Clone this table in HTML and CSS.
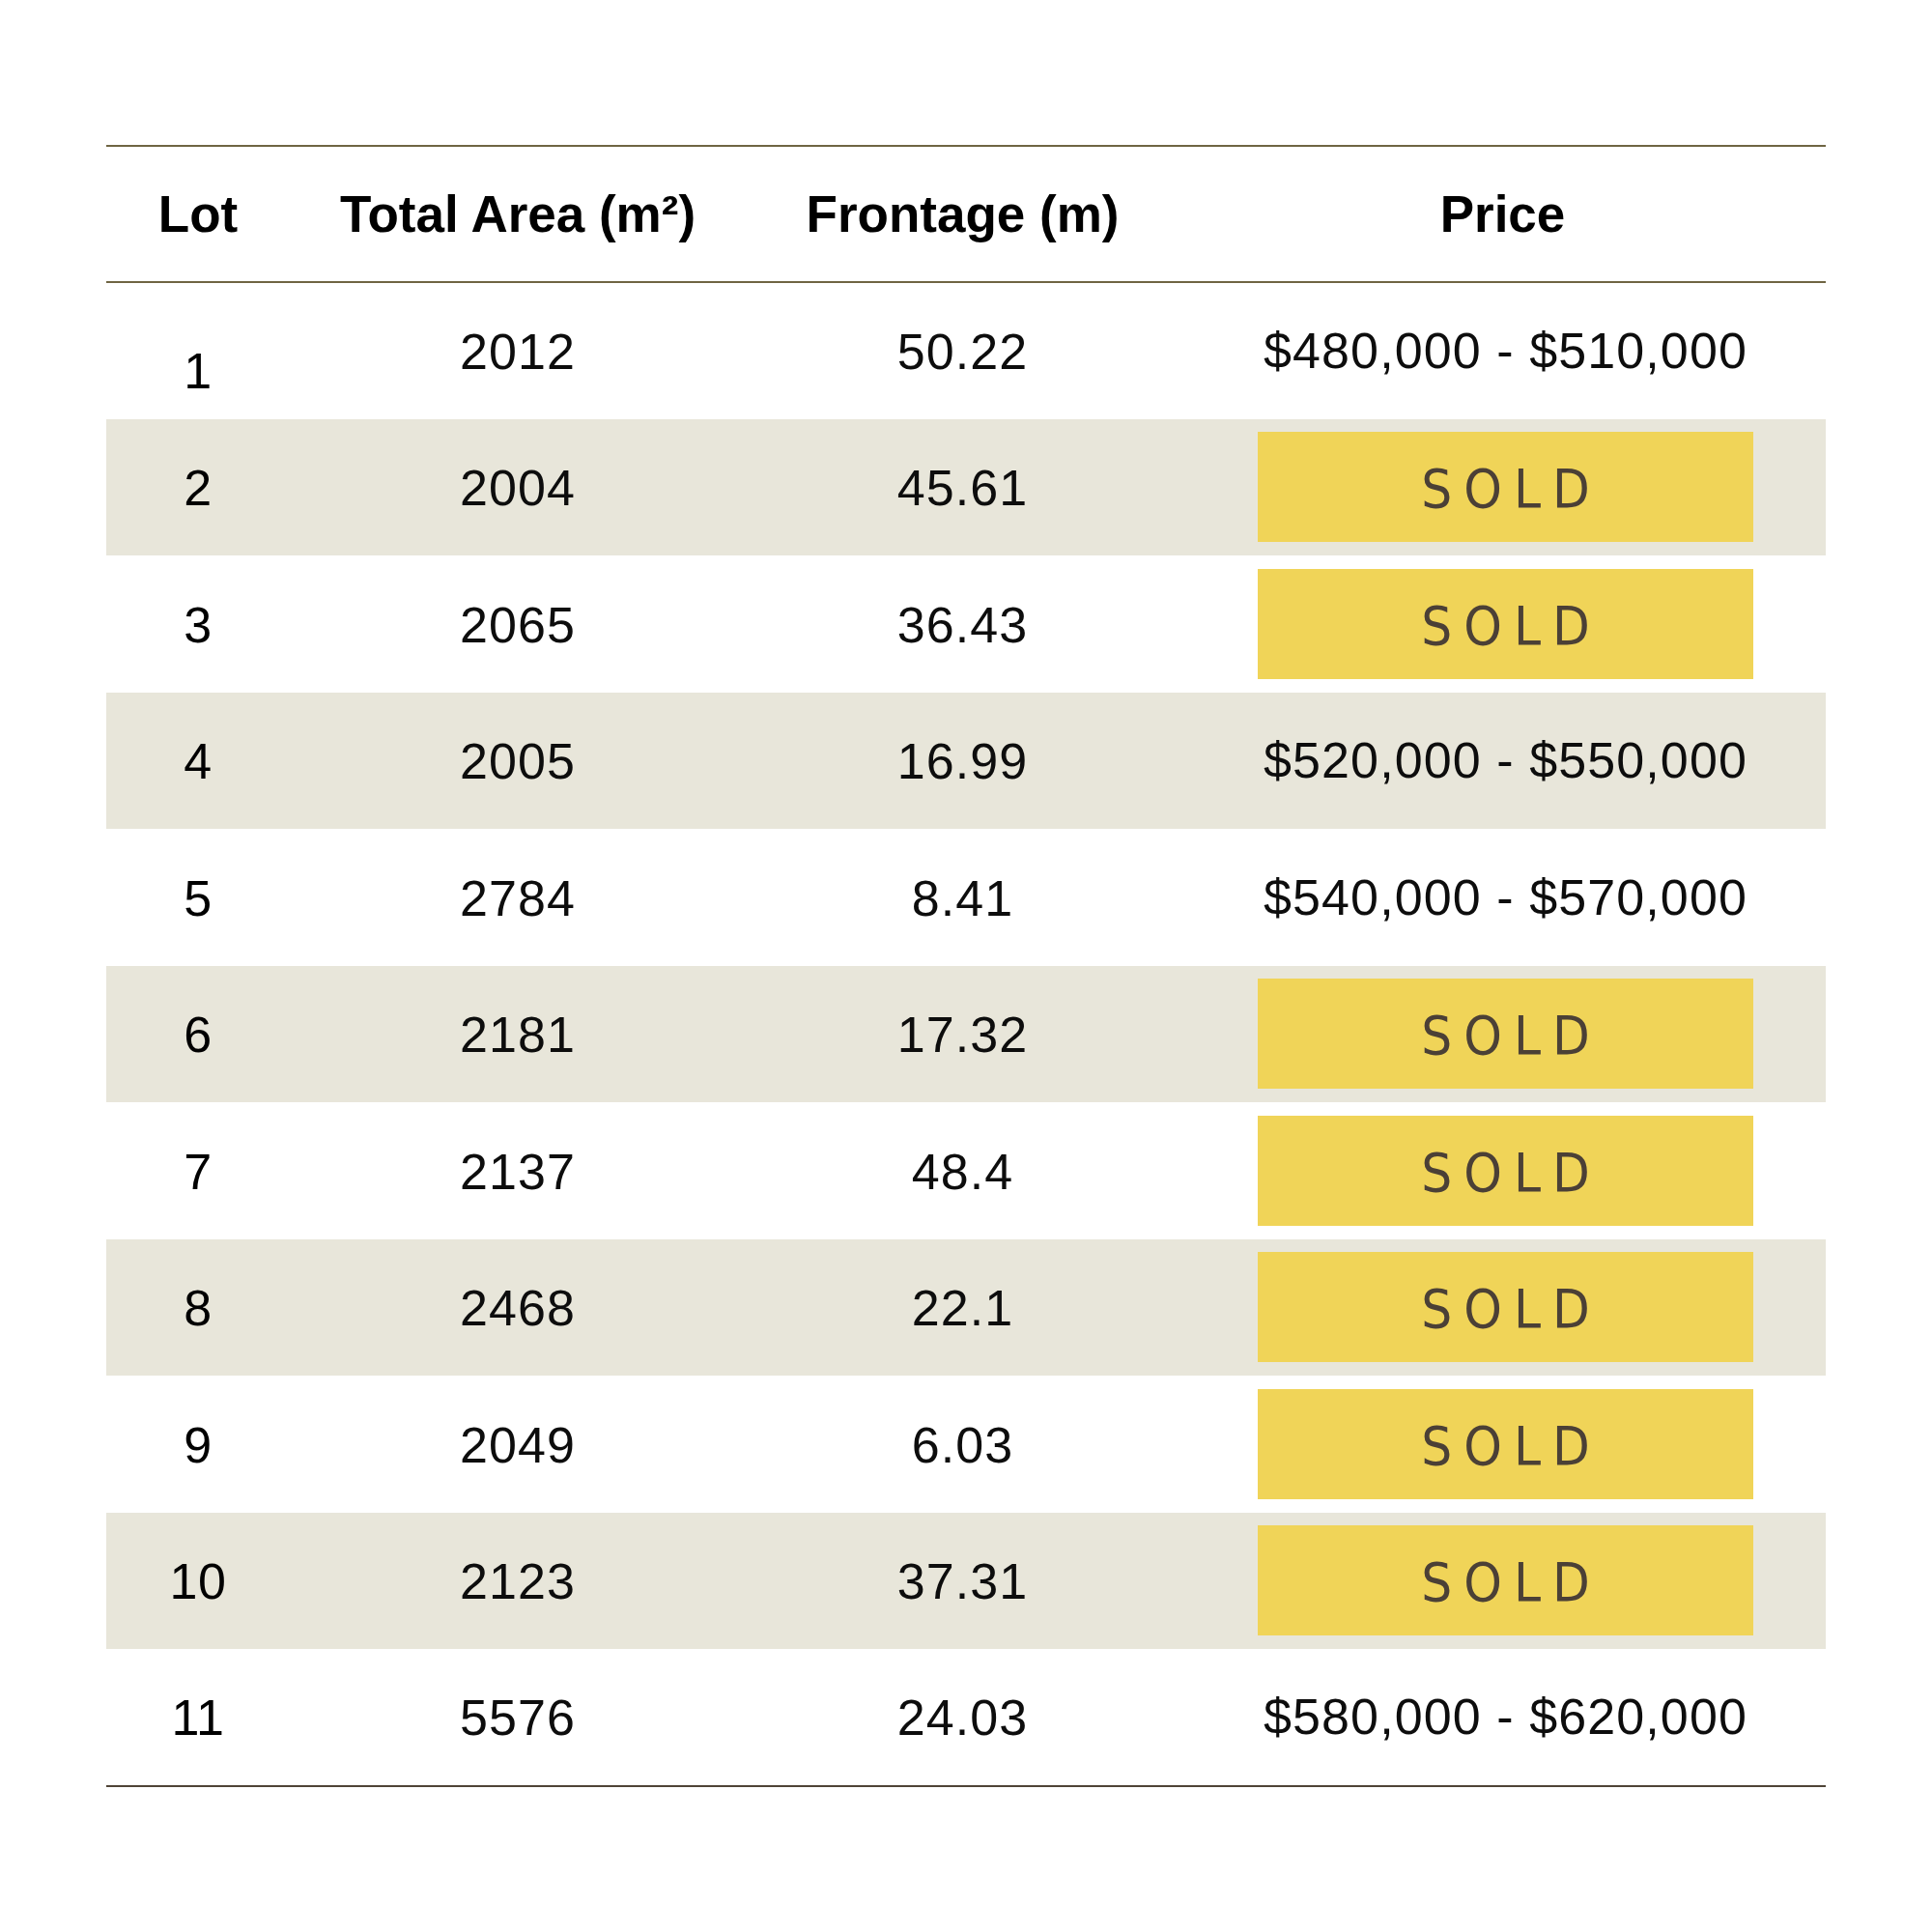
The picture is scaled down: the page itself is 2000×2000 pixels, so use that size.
FILE: index.html
```html
<!DOCTYPE html>
<html lang="en">
<head>
<meta charset="utf-8">
<title>Lots</title>
<link rel="stylesheet" href="styles.css">
</head>
<body>
<div class="page">
  <table class="lots">
    <colgroup>
      <col class="c-lot">
      <col class="c-area">
      <col class="c-front">
      <col class="c-price">
    </colgroup>
    <thead>
      <tr>
        <th>Lot</th>
        <th>Total Area (m²)</th>
        <th>Frontage (m)</th>
        <th>Price</th>
      </tr>
    </thead>
    <tbody>
      <tr><td class="lot lot-drop">1</td><td>2012</td><td>50.22</td><td class="price">$480,000 - $510,000</td></tr>
      <tr><td class="lot">2</td><td>2004</td><td>45.61</td><td class="price"><div class="sold">SOLD</div></td></tr>
      <tr><td class="lot">3</td><td>2065</td><td>36.43</td><td class="price"><div class="sold">SOLD</div></td></tr>
      <tr><td class="lot">4</td><td>2005</td><td>16.99</td><td class="price">$520,000 - $550,000</td></tr>
      <tr><td class="lot">5</td><td>2784</td><td>8.41</td><td class="price">$540,000 - $570,000</td></tr>
      <tr><td class="lot">6</td><td>2181</td><td>17.32</td><td class="price"><div class="sold">SOLD</div></td></tr>
      <tr><td class="lot">7</td><td>2137</td><td>48.4</td><td class="price"><div class="sold">SOLD</div></td></tr>
      <tr><td class="lot">8</td><td>2468</td><td>22.1</td><td class="price"><div class="sold">SOLD</div></td></tr>
      <tr><td class="lot">9</td><td>2049</td><td>6.03</td><td class="price"><div class="sold">SOLD</div></td></tr>
      <tr><td class="lot">10</td><td>2123</td><td>37.31</td><td class="price"><div class="sold">SOLD</div></td></tr>
      <tr><td class="lot">11</td><td>5576</td><td>24.03</td><td class="price">$580,000 - $620,000</td></tr>
    </tbody>
  </table>
</div>
</body>
</html>
```

FILE: styles.css
```css
html, body {
  margin: 0;
  padding: 0;
  background: #ffffff;
}

.page {
  width: 2000px;
  height: 2000px;
  padding: 150px 110px 0 110px;
  box-sizing: border-box;
}

.lots {
  width: 1780px;
  border-collapse: collapse;
  table-layout: fixed;
  font-family: "Liberation Sans", Arial, sans-serif;
  color: #0d0d0d;
}

.c-lot { width: 190px; }
.c-area { width: 472px; }
.c-front { width: 449px; }
.c-price { width: 669px; }

.lots thead tr {
  border-top: 2px solid #6f6543;
  border-bottom: 2px solid #6f6543;
}

.lots th {
  height: 139px;
  padding: 0;
  font-size: 53px;
  font-weight: 700;
  text-align: center;
  vertical-align: middle;
  color: #000000;
}

.lots tbody tr {
  height: 141.5px;
}

.lots tbody tr:nth-child(even) {
  background: #e8e6da;
}

.lots tbody tr:last-child {
  border-bottom: 2px solid #4f4437;
}

.lots td {
  padding: 2px 0 0 0;
  font-size: 52px;
  letter-spacing: 1.1px;
  text-align: center;
  vertical-align: middle;
  white-space: nowrap;
}

.lots td.lot {
  letter-spacing: 0.5px;
  color: #000000;
}

.lots td.lot-drop {
  padding-top: 42px;
}

.lots td.price {
  padding: 0 75px 0 81px;
}

.sold {
  height: 114px;
  box-sizing: border-box;
  padding-top: 4px;
  background: #f0d458;
  color: #4b4036;
  font-family: "DejaVu Sans Condensed", "DejaVu Sans", sans-serif;
  font-size: 56px;
  letter-spacing: 12px;
  text-indent: 12px;
  line-height: 110px;
  text-align: center;
}
```
